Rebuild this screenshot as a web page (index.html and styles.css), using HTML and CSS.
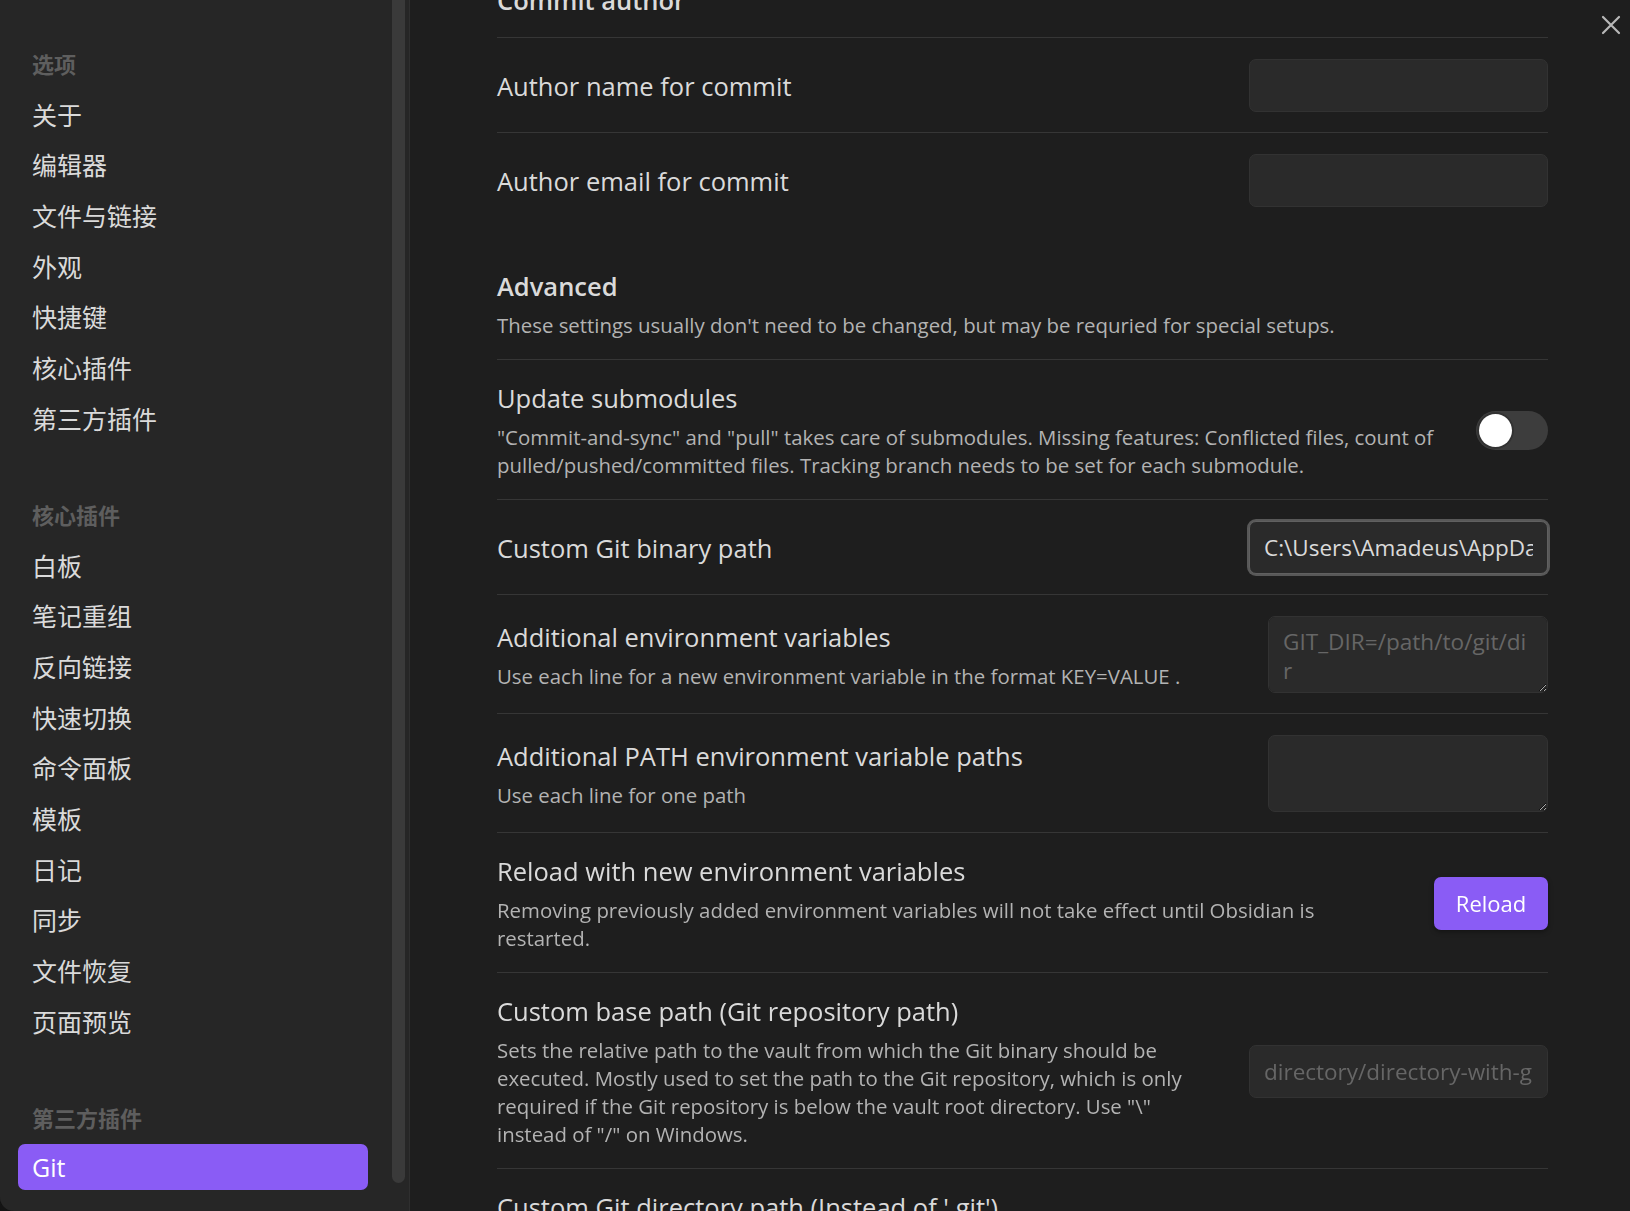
FILE: index.html
```html
<!DOCTYPE html>
<html lang="zh-CN">
<head>
<meta charset="utf-8">
<title>Git settings</title>
<link rel="stylesheet" href="styles.css">
</head>
<body>
<div class="modal">
  <aside class="sidebar">
    <nav class="nav">
      <div class="group">
        <div class="group-title">选项</div>
        <div class="nav-item">关于</div>
        <div class="nav-item">编辑器</div>
        <div class="nav-item">文件与链接</div>
        <div class="nav-item">外观</div>
        <div class="nav-item">快捷键</div>
        <div class="nav-item">核心插件</div>
        <div class="nav-item">第三方插件</div>
      </div>
      <div class="group">
        <div class="group-title">核心插件</div>
        <div class="nav-item">白板</div>
        <div class="nav-item">笔记重组</div>
        <div class="nav-item">反向链接</div>
        <div class="nav-item">快速切换</div>
        <div class="nav-item">命令面板</div>
        <div class="nav-item">模板</div>
        <div class="nav-item">日记</div>
        <div class="nav-item">同步</div>
        <div class="nav-item">文件恢复</div>
        <div class="nav-item">页面预览</div>
      </div>
      <div class="group">
        <div class="group-title">第三方插件</div>
        <div class="nav-item active">Git</div>
      </div>
    </nav>
    <div class="scroll-track"><div class="scroll-thumb"></div></div>
  </aside>

  <main class="content">
    <div class="settings">
      <div class="setting heading">
        <div class="info"><div class="name">Commit author</div></div>
      </div>

      <div class="setting">
        <div class="info"><div class="name">Author name for commit</div></div>
        <div class="control"><input class="text" type="text"></div>
      </div>

      <div class="setting">
        <div class="info"><div class="name">Author email for commit</div></div>
        <div class="control"><input class="text" type="text"></div>
      </div>

      <div class="setting heading">
        <div class="info">
          <div class="name">Advanced</div>
          <div class="desc">These settings usually don't need to be changed, but may be requried for special setups.</div>
        </div>
      </div>

      <div class="setting">
        <div class="info">
          <div class="name">Update submodules</div>
          <div class="desc">"Commit-and-sync" and "pull" takes care of submodules. Missing features: Conflicted files, count of pulled/pushed/committed files. Tracking branch needs to be set for each submodule.</div>
        </div>
        <div class="control"><div class="toggle"><div class="knob"></div></div></div>
      </div>

      <div class="setting">
        <div class="info"><div class="name">Custom Git binary path</div></div>
        <div class="control"><input class="text focused" type="text" value="C:\Users\Amadeus\AppData\Local\Programs\Git\bin\git.exe"></div>
      </div>

      <div class="setting">
        <div class="info">
          <div class="name">Additional environment variables</div>
          <div class="desc">Use each line for a new environment variable in the format KEY=VALUE .</div>
        </div>
        <div class="control"><textarea class="area" placeholder="GIT_DIR=/path/to/git/dir"></textarea></div>
      </div>

      <div class="setting">
        <div class="info">
          <div class="name">Additional PATH environment variable paths</div>
          <div class="desc">Use each line for one path</div>
        </div>
        <div class="control"><textarea class="area"></textarea></div>
      </div>

      <div class="setting">
        <div class="info">
          <div class="name">Reload with new environment variables</div>
          <div class="desc">Removing previously added environment variables will not take effect until Obsidian is restarted.</div>
        </div>
        <div class="control"><button class="btn">Reload</button></div>
      </div>

      <div class="setting">
        <div class="info">
          <div class="name">Custom base path (Git repository path)</div>
          <div class="desc">Sets the relative path to the vault from which the Git binary should be executed. Mostly used to set the path to the Git repository, which is only required if the Git repository is below the vault root directory. Use "\" instead of "/" on Windows.</div>
        </div>
        <div class="control"><input class="text" type="text" placeholder="directory/directory-with-git-repo"></div>
      </div>

      <div class="setting">
        <div class="info">
          <div class="name">Custom Git directory path (Instead of '.git')</div>
          <div class="desc">Requires restart of Obsidian to take effect. Use "\" instead of "/" on Windows.</div>
        </div>
        <div class="control"><input class="text" type="text" placeholder=".git"></div>
      </div>
    </div>
  </main>

  <button class="close" aria-label="Close">
    <svg viewBox="0 0 20 20" width="20" height="20"><path d="M2 2 L18 18 M18 2 L2 18" stroke="currentColor" stroke-width="2.2" stroke-linecap="round" fill="none"/></svg>
  </button>
</div>
</body>
</html>
```

FILE: styles.css
```css
* { box-sizing: border-box; }

html, body {
  margin: 0;
  padding: 0;
  background: #141414;
  overflow: hidden;
}

body {
  font-family: "Open Sans", "Noto Sans CJK SC", sans-serif;
  color: #dadada;
}

.modal {
  position: relative;
  display: flex;
  width: 1630px;
  height: 1211px;
  background: #1e1e1e;
  border-bottom-left-radius: 14px;
  overflow: hidden;
}

/* ---------- sidebar ---------- */
.sidebar {
  flex: 0 0 410px;
  display: flex;
  background: #262626;
  border-right: 1px solid #2f2f2f;
}

.nav {
  flex: 1;
  padding: 40px 24px 0 18px;
}

.group { margin-bottom: 50px; }

.group-title,
.nav-item {
  height: 46px;
  margin-bottom: 4.7px;
  padding-left: 14px;
  display: flex;
  align-items: center;
  border-radius: 7px;
}

.group-title {
  font-size: 22px;
  font-weight: 700;
  color: #5e5e5e;
}

.nav-item {
  font-size: 25px;
  color: #dadada;
}

.nav-item.active {
  background: #8a5cf5;
  color: #ffffff;
}

.scroll-track {
  flex: 0 0 13px;
  margin-right: 4px;
}

.scroll-thumb {
  height: 1183px;
  background: #3a3a3a;
  border-radius: 0 0 7px 7px;
}

/* ---------- content ---------- */
.content {
  flex: 1;
  padding: 0 82px 0 87px;
  overflow: hidden;
}

.settings { margin-top: -59px; }

.setting {
  display: flex;
  align-items: center;
  padding: 21px 0 20px;
  border-top: 1px solid #363636;
}

.setting.heading {
  border-top: none;
  padding-top: 42px;
}

.info {
  flex: 1 1 auto;
  margin-right: 30px;
}

.name {
  font-size: 25.5px;
  line-height: 34px;
  color: #dadada;
}

.heading .name { font-weight: 600; }

.desc {
  padding-top: 8px;
  font-size: 20.4px;
  line-height: 28px;
  color: #b3b3b3;
}

.control {
  flex: 0 0 auto;
  display: flex;
  justify-content: flex-end;
  align-items: center;
}

.text {
  width: 299px;
  height: 53px;
  padding: 0 14px;
  font-family: "Open Sans", sans-serif;
  font-size: 22.5px;
  color: #dadada;
  background: #2a2a2a;
  border: 1px solid #323232;
  border-radius: 7px;
  outline: none;
}

.text.focused {
  border-color: #606060;
  box-shadow: 0 0 0 2px #585858;
}

.text::placeholder,
.area::placeholder { color: #666666; }

.area {
  display: block;
  width: 280px;
  height: 77px;
  padding: 10px 18px 10px 14px;
  font-family: "Open Sans", sans-serif;
  font-size: 22.6px;
  line-height: 29px;
  color: #dadada;
  background: #2a2a2a;
  border: 1px solid #323232;
  border-radius: 7px;
  outline: none;
  resize: vertical;
  color-scheme: dark;
}

.toggle {
  width: 72px;
  height: 39px;
  padding-left: 3px;
  display: flex;
  align-items: center;
  background: #3d3d3d;
  border-radius: 20px;
}

.knob {
  width: 33px;
  height: 33px;
  border-radius: 50%;
  background: #ffffff;
  box-shadow: 0 0 0 2px rgba(0, 0, 0, 0.18);
}

.btn {
  width: 114px;
  height: 53px;
  font-family: "Open Sans", sans-serif;
  font-size: 22px;
  color: #ffffff;
  background: #8a5cf5;
  border: none;
  border-radius: 7px;
  box-shadow: 0 2px 5px rgba(0, 0, 0, 0.35);
}

.close {
  position: absolute;
  top: 15px;
  right: 9px;
  width: 20px;
  height: 20px;
  padding: 0;
  border: none;
  background: none;
  color: #b8b8b8;
}

.close svg { display: block; }
```
